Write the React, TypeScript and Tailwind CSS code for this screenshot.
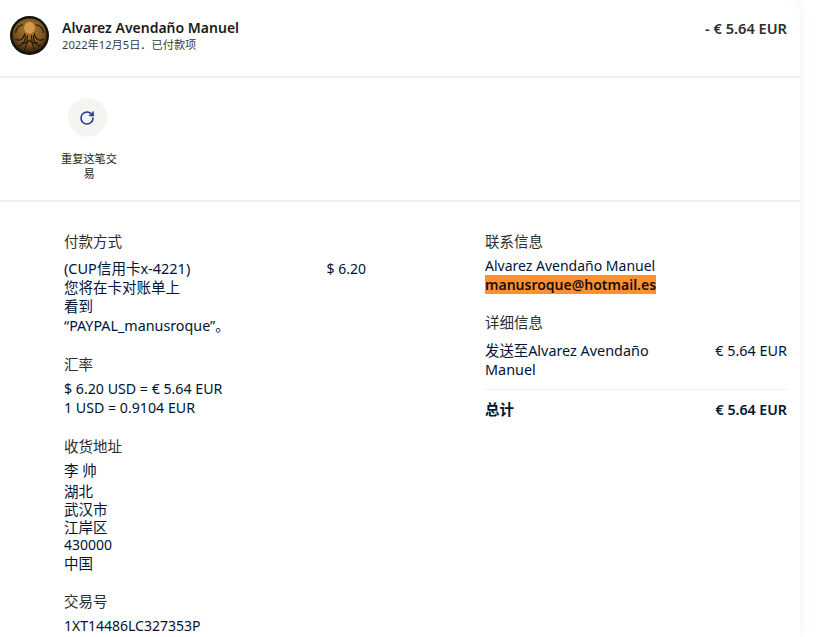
import { RotateCw } from 'lucide-react'

const fontStack = "font-['Noto_Sans','Noto_Sans_CJK_SC',sans-serif]"

function Avatar() {
  return (
    <svg className="w-[39px] h-[39px] shrink-0" viewBox="0 0 40 40">
      <defs>
        <radialGradient id="disc" cx="50%" cy="35%" r="65%">
          <stop offset="0%" stopColor="#b07a2c" />
          <stop offset="65%" stopColor="#7a5420" />
          <stop offset="100%" stopColor="#2a1d0c" />
        </radialGradient>
      </defs>
      <circle cx="20" cy="20" r="20" fill="#15120d" />
      <circle cx="20" cy="20" r="17.5" fill="url(#disc)" />
      <ellipse cx="20" cy="12" rx="5.5" ry="6" fill="#d19a48" />
      <g fill="none" stroke="#1d150a" strokeWidth="1.1" strokeLinecap="round">
        <path d="M15 18c-1 6-5 8-9 6" />
        <path d="M25 18c1 6 5 8 9 6" />
        <path d="M16 20c0 7-3 10-7 11" />
        <path d="M24 20c0 7 3 10 7 11" />
        <path d="M18 20c0 6-1 10-3 15" />
        <path d="M22 20c0 6 1 10 3 15" />
        <path d="M13 9c-4 1-7 4-7 8" />
        <path d="M27 9c4 1 7 4 7 8" />
        <path d="M12 27c3 2 5 1 8-2c3 3 5 4 8 2" />
      </g>
    </svg>
  )
}

function Label({ children, className = 'mb-[5px]' }: { children: React.ReactNode; className?: string }) {
  return <p className={`text-[#2c2e2f] text-[14.5px] leading-[19px] ${className}`}>{children}</p>
}

function Cjk({ children }: { children: React.ReactNode }) {
  return <p className="text-[14.5px]">{children}</p>
}

export default function App() {
  return (
    <div className={`${fontStack} w-[820px] h-[637px] overflow-hidden bg-white text-[#001435] text-[14px] leading-[19px]`}>
      <div className="w-[800px] h-full bg-white rounded-tr-[14px] shadow-[0_0_14px_rgba(0,0,0,0.06)]">
        <header className="h-[78px] flex items-start justify-between border-b-2 border-[#f1f0ec] pl-[10px] pr-[13px] pt-[16px]">
          <div className="flex items-center gap-[13px]">
            <Avatar />
            <div className="-mt-[1px]">
              <p className="font-semibold text-[14px] leading-[20px] text-[#1a1a1a]">Alvarez Avendaño Manuel</p>
              <p className="text-[11.2px] leading-[14px] text-[#3a3a3a]">2022年12月5日．已付款项</p>
            </div>
          </div>
          <p className="font-semibold text-[14.6px] leading-[20px] mt-[2px] text-[#2c2e2f]">- € 5.64 EUR</p>
        </header>

        <section className="h-[124px] border-b-2 border-[#f1f0ec] pt-[20px] pl-[60px]">
          <div className="w-[58px]">
            <div className="ml-[8px] w-[39px] h-[39px] rounded-full bg-[#f5f4f0] flex items-center justify-center">
              <RotateCw className="w-[16px] h-[16px] text-[#1f3a9e] -translate-x-[1px]" strokeWidth={2.4} />
            </div>
            <p className="mt-[14px] text-[11.2px] leading-[15px] text-center text-[#1a1a1a]">重复这笔交易</p>
          </div>
        </section>

        <section className="flex pl-[64px] pr-[13px] pt-[30px]">
          <div className="w-[421px] shrink-0">
            <Label className="mb-[8px]">付款方式</Label>
            <div className="flex w-[302px] justify-between">
              <div>
                <p className="text-[14.5px]">(CUP信用卡x-4221)</p>
                <Cjk>您将在卡对账单上</Cjk>
                <Cjk>看到</Cjk>
                <p className="text-[14.3px]">“PAYPAL_manusroque”。</p>
              </div>
              <p>$ 6.20</p>
            </div>

            <div className="mt-[20px]">
              <Label>汇率</Label>
              <p className="text-[14.2px]">$ 6.20 USD = € 5.64 EUR</p>
              <p className="text-[14.2px]">1 USD = 0.9104 EUR</p>
            </div>

            <div className="mt-[20px]">
              <Label>收货地址</Label>
              <Cjk>李 帅</Cjk>
              <div className="mt-[2px] leading-[18px] text-[14.5px]">
                <p>湖北</p>
                <p>武汉市</p>
                <p>江岸区</p>
                <p className="text-[14px]">430000</p>
                <p>中国</p>
              </div>
            </div>

            <div className="mt-[20px]">
              <Label>交易号</Label>
              <p>1XT14486LC327353P</p>
            </div>
          </div>

          <div className="flex-1">
            <Label>联系信息</Label>
            <p>Alvarez Avendaño Manuel</p>
            <p>
              <span className="font-semibold bg-[#ff9030] text-[#111]">manusroque@hotmail.es</span>
            </p>

            <div className="mt-[19px]">
              <Label className="mb-[9px]">详细信息</Label>
              <div className="flex justify-between pb-[10px] border-b border-[#f1f0ec]">
                <p className="w-[175px] text-[14.4px]">发送至Alvarez Avendaño Manuel</p>
                <p className="text-[14.4px]">€ 5.64 EUR</p>
              </div>
              <div className="flex justify-between font-semibold mt-[10px]">
                <p className="text-[14.5px]">总计</p>
                <p className="text-[14.2px]">€ 5.64 EUR</p>
              </div>
            </div>
          </div>
        </section>
      </div>
    </div>
  )
}
